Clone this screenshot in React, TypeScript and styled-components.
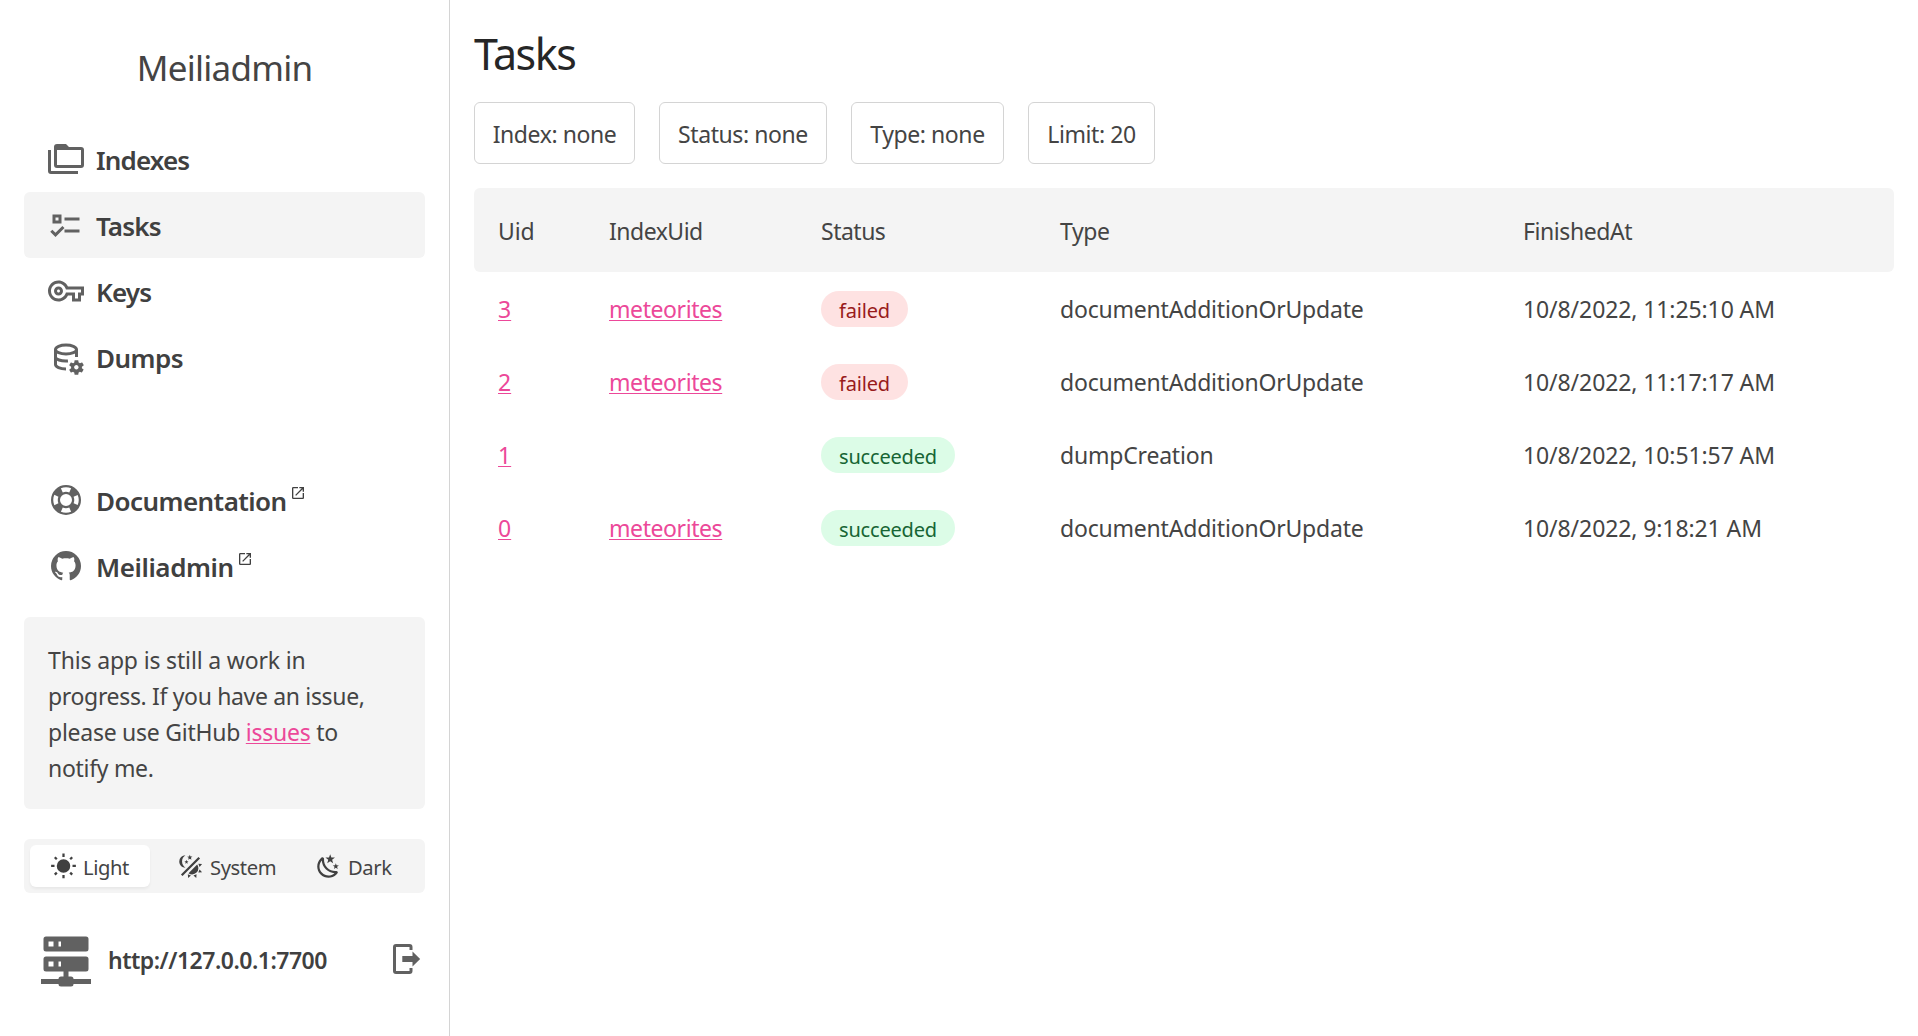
import React from "react";
import styled, { createGlobalStyle, css } from "styled-components";

const GlobalStyle = createGlobalStyle`
  * { box-sizing: border-box; }
  body {
    margin: 0;
    background: #fff;
    color: #444;
    font-family: "Noto Sans", "Open Sans", sans-serif;
    font-size: 23px;
    font-weight: 400;
    line-height: 36px;
  }
`;

const Page = styled.div`
  display: flex;
  height: 1036px;
  overflow: hidden;
`;

const Sidebar = styled.aside`
  width: 450px;
  flex: none;
  display: flex;
  flex-direction: column;
  padding: 0 24px;
  border-right: 1px solid #d4d4d4;
`;

const Brand = styled.h1`
  margin: 0;
  height: 126px;
  padding-top: 45px;
  text-align: center;
  font-size: 35px;
  font-weight: 400;
  line-height: 46px;
  letter-spacing: -0.75px;
`;

const Nav = styled.nav<{ $top?: number }>`
  display: flex;
  flex-direction: column;
  margin-top: ${(p) => p.$top ?? 0}px;
`;

const NavItem = styled.a<{ $active?: boolean }>`
  display: flex;
  align-items: center;
  height: 66px;
  padding-left: 24px;
  gap: 12px;
  border-radius: 6px;
  background: ${(p) => (p.$active ? "#f4f4f4" : "transparent")};
`;

const NavLabel = styled.span<{ $spacing?: number }>`
  display: flex;
  align-items: flex-start;
  gap: 3px;
  padding-top: 2px;
  color: #404040;
  font-size: 26px;
  font-weight: 600;
  letter-spacing: ${(p) => p.$spacing ?? -0.85}px;

  svg { margin-top: 2px; }
`;

const Icon = styled.svg<{ $size: number; $tone?: string }>`
  width: ${(p) => p.$size}px;
  height: ${(p) => p.$size}px;
  flex: none;
  fill: ${(p) => p.$tone ?? "#616161"};
`;

const link = css`
  color: #ec4899;
  text-decoration: underline;
  text-decoration-thickness: 1px;
  text-underline-offset: 2px;
`;

const Link = styled.a`
  ${link}
`;

const Notice = styled.p`
  margin: 18px 0 0;
  height: 192px;
  padding: 25px 24px 0;
  border-radius: 6px;
  background: #f4f4f4;
  letter-spacing: -0.3px;
`;

const NoticeLine = styled.span<{ $spacing: number }>`
  display: block;
  white-space: nowrap;
  letter-spacing: ${(p) => p.$spacing}px;
`;

const ThemeBar = styled.div`
  display: flex;
  margin-top: 30px;
  height: 54px;
  padding: 6px;
  border-radius: 6px;
  background: #f4f4f4;
`;

const ThemeOption = styled.button<{ $width: number; $active?: boolean }>`
  display: flex;
  align-items: center;
  width: ${(p) => p.$width}px;
  padding: 0 0 0 20px;
  gap: 6px;
  border: 0;
  border-radius: 6px;
  background: ${(p) => (p.$active ? "#fff" : "transparent")};
  box-shadow: ${(p) => (p.$active ? "0 2px 3px rgba(0,0,0,.05)" : "none")};
  color: #444;
  font: 400 20.2px/30px "Noto Sans", "Open Sans", sans-serif;
  letter-spacing: -0.4px;

  & + & { margin-left: 7px; }
  & + & + & { margin-left: 0; }
`;

const ThemeName = styled.span`
  padding-top: 2px;
`;

const Instance = styled.div`
  display: flex;
  align-items: center;
  margin: 36px -1px 0 0;
  height: 60px;
  padding-left: 12px;
`;

const Host = styled.span`
  flex: 1;
  padding: 2px 0 0 12px;
  color: #404040;
  font-weight: 600;
  letter-spacing: -0.5px;
`;

const Main = styled.main`
  flex: 1;
  min-width: 0;
  padding: 0 24px;
`;

const Heading = styled.h2`
  margin: 0;
  height: 102px;
  padding-top: 24px;
  color: #262626;
  font-size: 43px;
  font-weight: 400;
  line-height: 60px;
  letter-spacing: -1.5px;
`;

const Filters = styled.div`
  display: flex;
  gap: 24px;
  margin-bottom: 24px;
`;

const Filter = styled.button<{ $width: number }>`
  width: ${(p) => p.$width}px;
  height: 62px;
  padding: 2px 0 0;
  border: 1px solid #d4d4d4;
  border-radius: 6px;
  background: #fff;
  color: #444;
  font: 400 23px/36px "Noto Sans", "Open Sans", sans-serif;
  letter-spacing: -0.42px;
  white-space: nowrap;
`;

const Row = styled.div<{ $head?: boolean }>`
  display: grid;
  grid-template-columns: 111px 212px 239px 463px 1fr;
  align-items: center;
  height: ${(p) => (p.$head ? 84 : 73)}px;
  padding-left: 24px;
  border-radius: 6px;
  background: ${(p) => (p.$head ? "#f4f4f4" : "transparent")};
`;

const Cell = styled.div<{ $spacing?: number }>`
  padding-top: 1px;
  letter-spacing: ${(p) => p.$spacing ?? -0.42}px;
  white-space: nowrap;
`;

const Badge = styled.span<{ $ok: boolean }>`
  justify-self: start;
  height: 36px;
  padding: 3px 18px 0;
  border-radius: 18px;
  font-size: 20px;
  line-height: 34px;
  letter-spacing: -0.18px;
  color: ${(p) => (p.$ok ? "#166534" : "#991b1b")};
  background: ${(p) => (p.$ok ? "#dcfce7" : "#fee2e2")};
`;

const paths = {
  folders: "M22,4H14L12,2H6A2,2 0 0,0 4,4V16A2,2 0 0,0 6,18H22A2,2 0 0,0 24,16V6A2,2 0 0,0 22,4M22,16H6V6H22V16M2,6H0V20A2,2 0 0,0 2,22H20V20H2V6Z",
  checks: "M3,5H9V11H3V5M5,7V9H7V7H5M11,7H21V9H11V7M11,15H21V17H11V15M5,20L1.5,16.5L2.91,15.09L5,17.17L9.59,12.59L11,14L5,20Z",
  key: "M22 19h-6v-4h-2.68c-1.14 2.42-3.6 4-6.32 4-3.86 0-7-3.14-7-7s3.14-7 7-7c2.72 0 5.17 1.58 6.32 4H24v6h-2v4zm-4-2h2v-4h2v-2H11.94l-.23-.67C11.01 8.34 9.11 7 7 7c-2.76 0-5 2.24-5 5s2.24 5 5 5c2.11 0 4.01-1.34 4.71-3.33l.23-.67H18v4zM7 15c-1.65 0-3-1.35-3-3s1.35-3 3-3 3 1.35 3 3-1.35 3-3 3zm0-4c-.55 0-1 .45-1 1s.45 1 1 1 1-.45 1-1-.45-1-1-1z",
  lifebuoy: "M19.79,15.41C20.74,13.24 20.74,10.75 19.79,8.59L17.05,9.83C17.65,11.21 17.65,12.78 17.06,14.17L19.79,15.41M15.42,4.21C13.25,3.26 10.76,3.26 8.59,4.21L9.83,6.94C11.22,6.35 12.79,6.35 14.18,6.95L15.42,4.21M4.21,8.58C3.26,10.76 3.26,13.24 4.21,15.42L6.95,14.17C6.35,12.79 6.35,11.21 6.95,9.82L4.21,8.58M8.59,19.79C10.76,20.74 13.25,20.74 15.42,19.78L14.18,17.05C12.8,17.65 11.22,17.65 9.84,17.06L8.59,19.79M12,2A10,10 0 0,1 22,12A10,10 0 0,1 12,22A10,10 0 0,1 2,12A10,10 0 0,1 12,2M12,8A4,4 0 0,0 8,12A4,4 0 0,0 12,16A4,4 0 0,0 16,12A4,4 0 0,0 12,8Z",
  github: "M12,2A10,10 0 0,0 2,12C2,16.42 4.87,20.17 8.84,21.5C9.34,21.58 9.5,21.27 9.5,21C9.5,20.77 9.5,20.14 9.5,19.31C6.73,19.91 6.14,17.97 6.14,17.97C5.68,16.81 5.03,16.5 5.03,16.5C4.12,15.88 5.1,15.9 5.1,15.9C6.1,15.97 6.63,16.93 6.63,16.93C7.5,18.45 8.97,18 9.54,17.76C9.63,17.11 9.89,16.67 10.17,16.42C7.95,16.17 5.62,15.31 5.62,11.5C5.62,10.39 6,9.5 6.65,8.79C6.55,8.54 6.2,7.5 6.75,6.15C6.75,6.15 7.59,5.88 9.5,7.17C10.29,6.95 11.15,6.84 12,6.84C12.85,6.84 13.71,6.95 14.5,7.17C16.41,5.88 17.25,6.15 17.25,6.15C17.8,7.5 17.45,8.54 17.35,8.79C18,9.5 18.38,10.39 18.38,11.5C18.38,15.32 16.04,16.16 13.81,16.41C14.17,16.72 14.5,17.33 14.5,18.26C14.5,19.6 14.5,20.68 14.5,21C14.5,21.27 14.66,21.59 15.17,21.5C19.14,20.16 22,16.42 22,12A10,10 0 0,0 12,2Z",
  external: "M19 19H5V5h7V3H5a2 2 0 0 0-2 2v14a2 2 0 0 0 2 2h14c1.1 0 2-.9 2-2v-7h-2v7zM14 3v2h3.59l-9.83 9.83 1.41 1.41L19 6.41V10h2V3h-7z",
  sun: "M3.55,18.54L4.96,19.95L6.76,18.16L5.34,16.74M11,22.45H13V19.5H11M12,5.5A6,6 0 0,0 6,11.5A6,6 0 0,0 12,17.5A6,6 0 0,0 18,11.5C18,8.18 15.31,5.5 12,5.5M20,12.5H23V10.5H20M17.24,18.16L19.04,19.95L20.45,18.54L18.66,16.74M20.45,4.46L19.04,3.05L17.24,4.84L18.66,6.26M13,0.55H11V3.5H13M4,10.5H1V12.5H4M6.76,4.84L4.96,3.05L3.55,4.46L5.34,6.26L6.76,4.84Z",
  system: "M7.5,2C5.71,3.15 4.5,5.18 4.5,7.5C4.5,9.82 5.71,11.85 7.53,13C4.46,13 2,10.54 2,7.5A5.5,5.5 0 0,1 7.5,2M19.07,3.5L20.5,4.93L4.93,20.5L3.5,19.07L19.07,3.5M12.89,5.93L11.41,5L9.97,6L10.39,4.3L9,3.24L10.75,3.12L11.33,1.47L12,3.1L13.73,3.13L12.38,4.26L12.89,5.93M9.59,9.54L8.43,8.81L7.31,9.59L7.65,8.27L6.56,7.44L7.92,7.35L8.37,6.06L8.88,7.33L10.24,7.36L9.19,8.23L9.59,9.54M19,13.5A5.5,5.5 0 0,1 13.5,19C12.28,19 11.15,18.6 10.24,17.93L17.93,10.24C18.6,11.15 19,12.28 19,13.5M14.6,20.08L17.37,18.93L17.13,22.28L14.6,20.08M18.93,17.38L20.08,14.61L22.28,17.15L18.93,17.38M20.08,12.42L18.94,9.64L22.28,9.88L20.08,12.42M9.63,18.93L12.4,20.08L9.87,22.27L9.63,18.93Z",
  night: "M17.75,4.09L15.22,6.03L16.13,9.09L13.5,7.28L10.87,9.09L11.78,6.03L9.25,4.09L12.44,4L13.5,1L14.56,4L17.75,4.09M21.25,11L19.61,12.25L20.2,14.23L18.5,13.06L16.8,14.23L17.39,12.25L15.75,11L17.81,10.95L18.5,9L19.19,10.95L21.25,11M18.97,15.95C19.8,15.87 20.69,17.05 20.16,17.8C19.84,18.25 19.5,18.67 19.08,19.07C15.17,23 8.84,23 4.94,19.07C1.03,15.17 1.03,8.83 4.94,4.93C5.34,4.53 5.76,4.17 6.21,3.85C6.96,3.32 8.14,4.21 8.06,5.04C7.79,7.9 8.75,10.87 10.95,13.06C13.14,15.26 16.1,16.22 18.97,15.95M17.33,17.97C14.5,17.81 11.7,16.64 9.53,14.5C7.36,12.31 6.2,9.5 6.04,6.68C3.23,9.82 3.34,14.64 6.35,17.66C9.37,20.67 14.19,20.78 17.33,17.97Z",
  server: "M13,19H14A1,1 0 0,1 15,20H22V22H15A1,1 0 0,1 14,23H10A1,1 0 0,1 9,22H2V20H9A1,1 0 0,1 10,19H11V17H4A1,1 0 0,1 3,16V12A1,1 0 0,1 4,11H20A1,1 0 0,1 21,12V16A1,1 0 0,1 20,17H13V19M4,3H20A1,1 0 0,1 21,4V8A1,1 0 0,1 20,9H4A1,1 0 0,1 3,8V4A1,1 0 0,1 4,3M9,7H10V5H9V7M9,15H10V13H9V15M5,5V7H7V5H5M5,13V15H7V13H5Z",
  exit: "M4 2H13A2 2 0 0 1 15 4V6H13V4H4V20H13V18H15V20A2 2 0 0 1 13 22H4A2 2 0 0 1 2 20V4A2 2 0 0 1 4 2M8.2 10H15V7L20.1 12L15 17V14H8.2Z",
};

const Glyph = ({ name, size = 36, tone }: { name: keyof typeof paths; size?: number; tone?: string }) => (
  <Icon viewBox="0 0 24 24" $size={size} $tone={tone}>
    <path d={paths[name]} />
  </Icon>
);

const DatabaseCog = () => (
  <Icon viewBox="0 0 24 24" $size={36}>
    <g fill="none" stroke="#616161" strokeWidth="2">
      <ellipse cx="12" cy="7" rx="7" ry="3" />
      <path d="M5 7V17C5 18.6 8 20 12 20M5 12C5 13.4 8.5 15 13.3 14.6M19 7V12" />
    </g>
    <path
      transform="translate(.9 .9)"
      d="M21.7 18.6V17.6L22.8 16.8C22.9 16.7 23 16.6 22.9 16.5L21.9 14.8C21.9 14.7 21.7 14.7 21.6 14.7L20.4 15.2C20.1 15 19.8 14.8 19.5 14.7L19.3 13.4C19.3 13.3 19.2 13.2 19.1 13.2H17.1C16.9 13.2 16.8 13.3 16.8 13.4L16.6 14.7C16.3 14.9 16.1 15 15.8 15.2L14.6 14.7C14.5 14.7 14.4 14.7 14.3 14.8L13.3 16.5C13.3 16.6 13.3 16.7 13.4 16.8L14.5 17.6V18.6L13.4 19.4C13.3 19.5 13.2 19.6 13.3 19.7L14.3 21.4C14.4 21.5 14.5 21.5 14.6 21.5L15.8 21C16 21.2 16.3 21.4 16.6 21.5L16.8 22.8C16.9 22.9 17 23 17.1 23H19.1C19.2 23 19.3 22.9 19.3 22.8L19.5 21.5C19.8 21.3 20 21.2 20.3 21L21.5 21.4C21.6 21.4 21.7 21.4 21.8 21.3L22.8 19.6C22.9 19.5 22.9 19.4 22.8 19.4L21.7 18.6M18 19.5C17.2 19.5 16.5 18.8 16.5 18S17.2 16.5 18 16.5 19.5 17.2 19.5 18 18.8 19.5 18 19.5"
    />
  </Icon>
);

const filters = [
  { text: "Index: none", width: 161 },
  { text: "Status: none", width: 168 },
  { text: "Type: none", width: 153 },
  { text: "Limit: 20", width: 127 },
];

const tasks = [
  { uid: 3, index: "meteorites", status: "failed", type: "documentAdditionOrUpdate", at: "10/8/2022, 11:25:10 AM" },
  { uid: 2, index: "meteorites", status: "failed", type: "documentAdditionOrUpdate", at: "10/8/2022, 11:17:17 AM" },
  { uid: 1, index: "", status: "succeeded", type: "dumpCreation", at: "10/8/2022, 10:51:57 AM" },
  { uid: 0, index: "meteorites", status: "succeeded", type: "documentAdditionOrUpdate", at: "10/8/2022, 9:18:21 AM" },
];

export default function App() {
  return (
    <Page>
      <GlobalStyle />
      <Sidebar>
        <Brand>Meiliadmin</Brand>
        <Nav>
          <NavItem><Glyph name="folders" /><NavLabel>Indexes</NavLabel></NavItem>
          <NavItem $active><Glyph name="checks" /><NavLabel>Tasks</NavLabel></NavItem>
          <NavItem><Glyph name="key" /><NavLabel>Keys</NavLabel></NavItem>
          <NavItem><DatabaseCog /><NavLabel $spacing={-0.55}>Dumps</NavLabel></NavItem>
        </Nav>
        <Nav $top={77}>
          <NavItem>
            <Glyph name="lifebuoy" />
            <NavLabel $spacing={-0.55}>Documentation<Glyph name="external" size={16} tone="#404040" /></NavLabel>
          </NavItem>
          <NavItem>
            <Glyph name="github" />
            <NavLabel $spacing={-0.42}>Meiliadmin<Glyph name="external" size={16} tone="#404040" /></NavLabel>
          </NavItem>
        </Nav>
        <Notice>
          <NoticeLine $spacing={-0.16}>This app is still a work in</NoticeLine>
          <NoticeLine $spacing={-0.34}>progress. If you have an issue,</NoticeLine>
          <NoticeLine $spacing={-0.26}>please use GitHub <Link>issues</Link> to</NoticeLine>
          <NoticeLine $spacing={-0.3}>notify me.</NoticeLine>
        </Notice>
        <ThemeBar>
          <ThemeOption $width={120} $active><Glyph name="sun" size={27} tone="#404040" /><ThemeName>Light</ThemeName></ThemeOption>
          <ThemeOption $width={138}><Glyph name="system" size={27} tone="#404040" /><ThemeName>System</ThemeName></ThemeOption>
          <ThemeOption $width={116}><Glyph name="night" size={27} tone="#404040" /><ThemeName>Dark</ThemeName></ThemeOption>
        </ThemeBar>
        <Instance>
          <Glyph name="server" size={60} />
          <Host>http://127.0.0.1:7700</Host>
          <Glyph name="exit" />
        </Instance>
      </Sidebar>
      <Main>
        <Heading>Tasks</Heading>
        <Filters>
          {filters.map((f) => (
            <Filter key={f.text} $width={f.width}>{f.text}</Filter>
          ))}
        </Filters>
        <Row $head>
          <Cell $spacing={-0.1}>Uid</Cell>
          <Cell $spacing={-0.5}>IndexUid</Cell>
          <Cell $spacing={-0.5}>Status</Cell>
          <Cell>Type</Cell>
          <Cell>FinishedAt</Cell>
        </Row>
        {tasks.map((t) => (
          <Row key={t.uid}>
            <Cell $spacing={0}><Link>{t.uid}</Link></Cell>
            <Cell><Link>{t.index}</Link></Cell>
            <Badge $ok={t.status === "succeeded"}>{t.status}</Badge>
            <Cell $spacing={-0.2}>{t.type}</Cell>
            <Cell $spacing={-0.1}>{t.at}</Cell>
          </Row>
        ))}
      </Main>
    </Page>
  );
}
